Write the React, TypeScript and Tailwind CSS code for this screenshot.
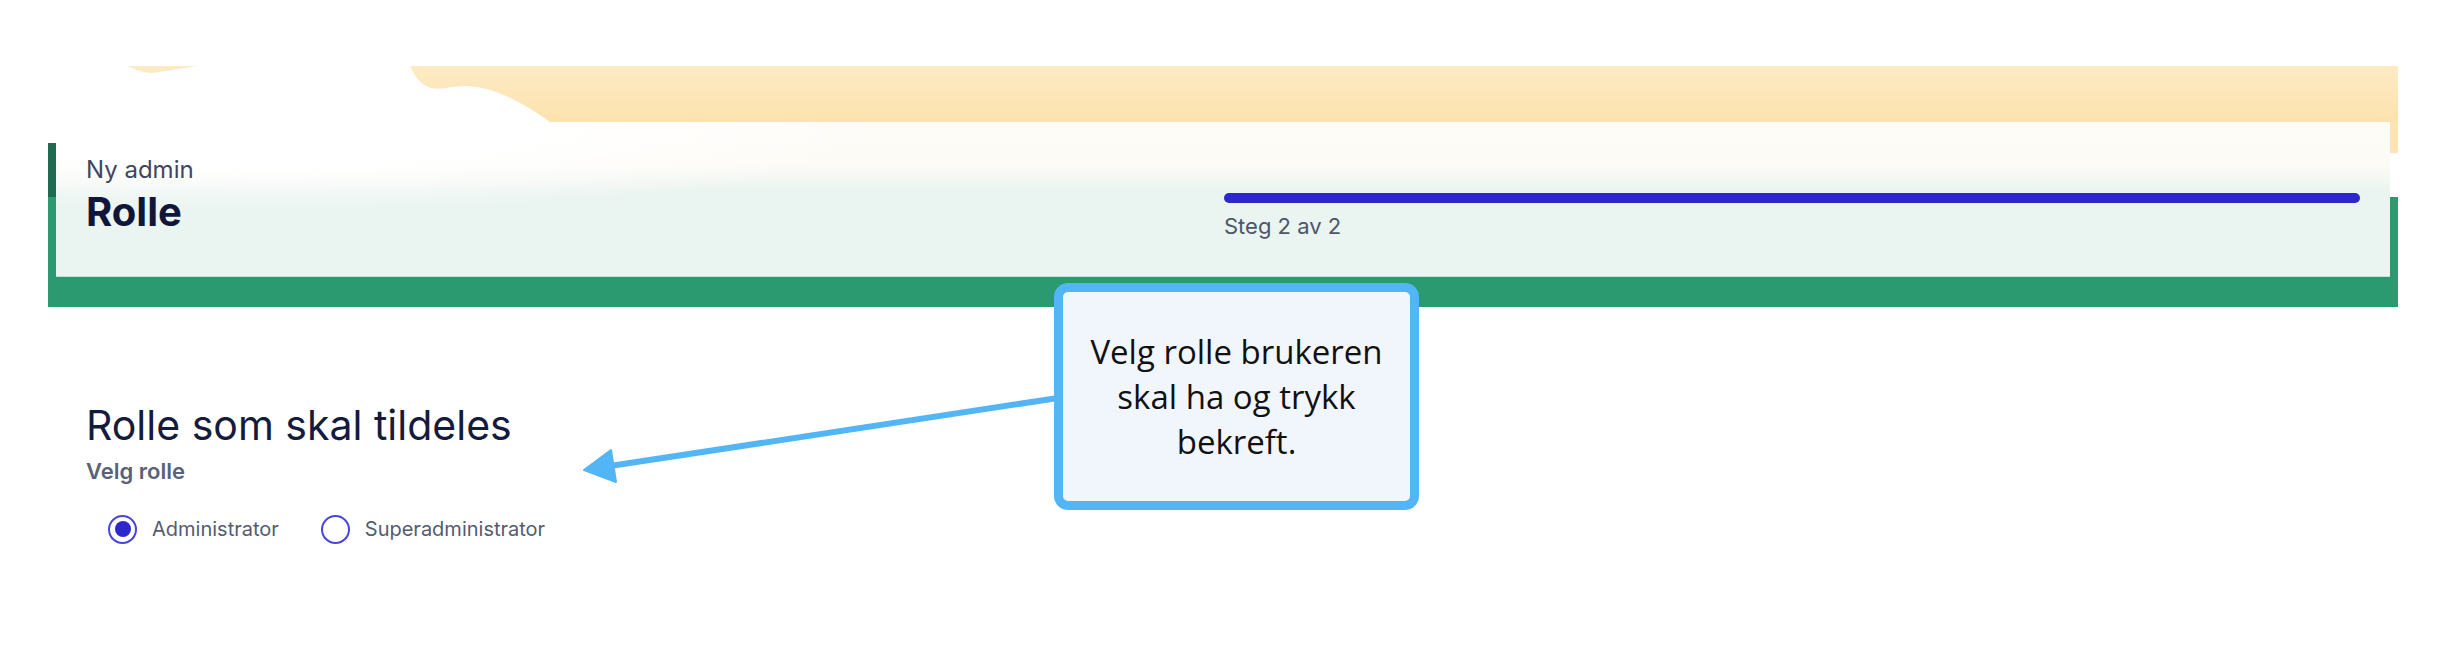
export default function App() {
  return (
    <div className="relative h-[654px] w-[2464px] overflow-hidden bg-white font-['Inter',sans-serif]">
      {/* Page header */}
      <header className="ml-[48px] mt-[66px] flex w-[2350px] flex-col">
        <div className="relative h-[56px] bg-gradient-to-b from-[#fdebc5] to-[#fde2ad]">
          {/* cloud */}
          <svg className="absolute left-0 top-0" width="560" height="56" viewBox="0 0 560 56">
            <path
              d="M0 0 H79 C88 4 96 7 104 7 C120 5 136 2 149 0 H362 C366 9 371 17 380 21 C390 25 400 21 414 20 C440 19 468 32 502 56 H0 Z"
              fill="#ffffff"
            />
          </svg>
        </div>
        <div className="flex h-[155px]">
          <div className="w-[8px] bg-[linear-gradient(to_bottom,#ffffff_0px,#ffffff_21px,#1e6b51_21px,#1e6b51_75px,#2c9a70_75px)]" />
          <div className="flex flex-1 border-b border-[#c6e2d5] bg-[radial-gradient(ellipse_620px_80px_at_220px_10px,#ffffff_40%,rgba(255,255,255,0)_100%),linear-gradient(to_bottom,#fefcf7_0px,#fdfbf5_42px,#eaf4f0_70px,#eaf4f0_100%)] px-[30px]">
            <div className="w-[1138px] pt-[36px]">
              <p className="text-[24px] leading-[24px] text-[#3f4660]">Ny admin</p>
              <h1 className="mt-[10px] text-[40px] font-bold leading-[40px] text-[#10163a]">Rolle</h1>
            </div>
            <div className="flex-1 pt-[71px]">
              <div className="h-[10px] rounded-full bg-[#2c27cb]" />
              <p className="mt-[12px] text-[22px] leading-[22px] text-[#4d546b]">Steg 2 av 2</p>
            </div>
          </div>
          <div className="w-[8px] bg-[linear-gradient(to_bottom,#fde4b2_0px,#fde4b2_31px,#ffffff_31px,#ffffff_75px,#2c9a70_75px)]" />
        </div>
        <div className="h-[30px] bg-[#2c9a70]" />
      </header>

      {/* Form */}
      <main className="pl-[86px] pt-[98px]">
        <h2 className="text-[41px] leading-[40px] text-[#151b3a]">Rolle som skal tildeles</h2>
        <p className="mt-[15px] text-[22px] font-semibold leading-[22px] text-[#5a6178]">Velg rolle</p>
        <div className="mt-[33px] flex h-[28px] items-center pl-[22px] text-[20px] leading-[28px] text-[#555b70]">
          <label className="flex items-center gap-[15px]">
            <span className="flex h-[29px] w-[29px] items-center justify-center rounded-full border-2 border-[#4a44df]">
              <span className="h-[16px] w-[16px] rounded-full bg-[#2d28cc]" />
            </span>
            Administrator
          </label>
          <label className="ml-[42px] flex items-center gap-[15px]">
            <span className="h-[29px] w-[29px] rounded-full border-2 border-[#4a44df]" />
            Superadministrator
          </label>
        </div>
      </main>

      {/* Annotation arrow */}
      <svg className="pointer-events-none absolute left-0 top-0" width="2464" height="654">
        <line x1="1058" y1="398" x2="610" y2="466" stroke="#52b6f6" strokeWidth="6" />
        <polygon
          points="584,470 611,450 616,482"
          fill="#52b6f6"
          stroke="#52b6f6"
          strokeWidth="2"
          strokeLinejoin="round"
        />
      </svg>

      {/* Annotation callout */}
      <div className="absolute left-[1054px] top-[283px] flex h-[227px] w-[365px] items-center justify-center rounded-[14px] border-[9px] border-[#52b6f6] bg-[#f1f6fd] text-center font-['Open_Sans',sans-serif] text-[33px] leading-[45px] text-[#111111]">
        <p>
          Velg rolle brukeren
          <br />
          skal ha og trykk
          <br />
          bekreft.
        </p>
      </div>
    </div>
  )
}
